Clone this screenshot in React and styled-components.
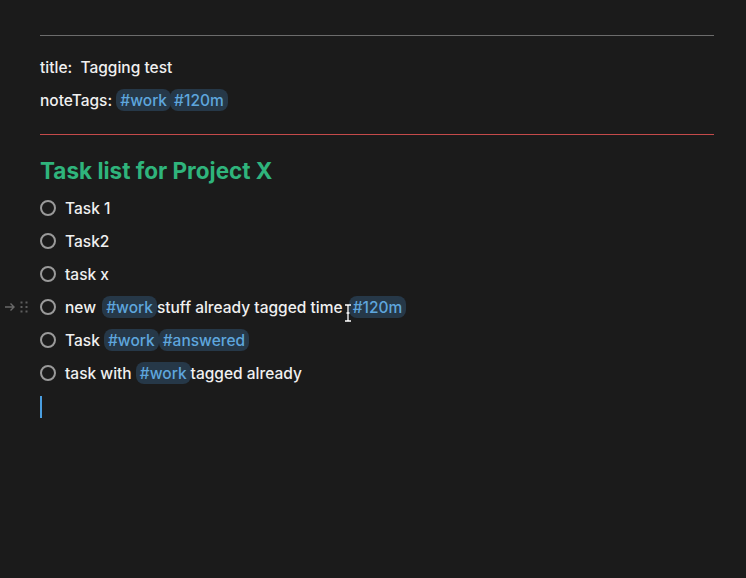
import React from 'react'
import styled, { createGlobalStyle } from 'styled-components'

const Global = createGlobalStyle`
  html, body { margin: 0; background: #1b1b1b; }
  body {
    font-family: Inter, "Noto Sans", sans-serif;
    color: #f0f0f0;
    -webkit-font-smoothing: antialiased;
  }
`

const Page = styled.div`
  width: 746px;
  height: 578px;
  background: #1b1b1b;
  padding: 35px 32px 0 40px;
  box-sizing: border-box;
`

const Rule = styled.div`
  height: 1px;
  background: ${(p) => p.color};
`

const Meta = styled.div`
  display: flex;
  flex-direction: column;
  gap: 11px;
  padding: 20px 0 23px;
  font-size: 15.5px;
  font-weight: 500;
`

const MetaLine = styled.div`
  display: flex;
  align-items: center;
  height: 22px;
  white-space: pre;
`

const Tag = styled.span`
  display: inline-flex;
  align-items: center;
  height: 22px;
  padding: 0 4px;
  border-radius: 8px;
  background: #263848;
  color: #5ea6dd;
  font-size: 15.5px;
  font-weight: 500;
  margin-left: ${(p) => p.ml || 0}px;
`

const Heading = styled.h1`
  margin: 22px 0 12px;
  font-size: 22.5px;
  font-weight: 700;
  color: #2fb47c;
  line-height: 28px;
`

const List = styled.div`
  display: flex;
  flex-direction: column;
  gap: 11px;
`

const Row = styled.div`
  position: relative;
  display: flex;
  align-items: center;
  height: 22px;
  font-size: 15.5px;
  font-weight: 500;
  white-space: pre;
`

const Circle = styled.span`
  width: 12px;
  height: 12px;
  border: 2px solid #9a9a9a;
  border-radius: 50%;
  margin-right: 9px;
  flex-shrink: 0;
`

const Gutter = styled.div`
  position: absolute;
  left: -36px;
  top: 0;
  height: 22px;
  display: flex;
  align-items: center;
  gap: 4px;
`

const Caret = styled.div`
  width: 2px;
  height: 22px;
  background: #4a9ee0;
  margin-top: 12px;
`

const Pointer = styled.svg`
  position: absolute;
  left: 304px;
  top: 8px;
`

const Task = ({ children, gutter }) => (
  <Row>
    {gutter && (
      <Gutter>
        <svg width="12" height="10" viewBox="0 0 12 10">
          <path d="M1 5h9M6.5 1.5L10 5 6.5 8.5" stroke="#6a6a6a" strokeWidth="1.4" fill="none" />
        </svg>
        <svg width="8" height="12" viewBox="0 0 8 12">
          {[1.5, 6, 10.5].map((y) =>
            [1.5, 6.5].map((x) => <rect key={x + '-' + y} x={x - 1} y={y - 1} width="2" height="2" fill="#5e5e5e" />)
          )}
        </svg>
      </Gutter>
    )}
    <Circle />
    {children}
  </Row>
)

export default function App() {
  return (
    <>
      <Global />
      <Page>
        <Rule color="#6c6c6c" />
        <Meta>
          <MetaLine>title:  Tagging test</MetaLine>
          <MetaLine>
            noteTags: <Tag>#work</Tag><Tag ml={-1}>#120m</Tag>
          </MetaLine>
        </Meta>
        <Rule color="#c44a4a" />
        <Heading>Task list for Project X</Heading>
        <List>
          <Task>Task 1</Task>
          <Task>Task2</Task>
          <Task>task x</Task>
          <Task gutter>
            new <Tag ml={2}>#work</Tag>stuff already tagged time <Tag ml={2}>#120m</Tag>
            <Pointer width="8" height="18" viewBox="0 0 8 18">
              <path d="M1 1h2.5L4 2l.5-1H7M4 2v14M1 17h2.5L4 16l.5 1H7M2.5 9h3" stroke="#fff" strokeWidth="1.3" fill="none" />
            </Pointer>
          </Task>
          <Task>Task <Tag>#work</Tag><Tag>#answered</Tag></Task>
          <Task>task with <Tag>#work</Tag>tagged already</Task>
        </List>
        <Caret />
      </Page>
    </>
  )
}
